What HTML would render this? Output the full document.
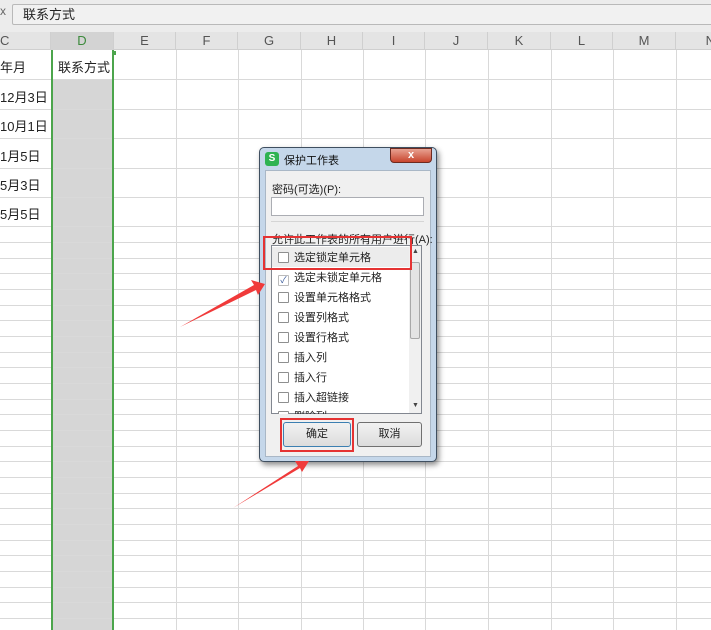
<!DOCTYPE html>
<html><head><meta charset="utf-8"><style>
*{margin:0;padding:0;box-sizing:border-box}
body{width:711px;height:630px;overflow:hidden;background:#fff;position:relative;font-family:"Liberation Sans","Noto Sans CJK SC",sans-serif;font-size:12px;color:#222}
.a{position:absolute}
.vl{position:absolute;top:50px;bottom:0;width:1px;background:#d9d9d9}
.hl{position:absolute;left:0;right:0;height:1px;background:#d9d9d9}
.hd{position:absolute;top:32px;height:18px;font-size:13px;color:#555;text-align:center;line-height:18px;border-right:1px solid #cfcfcf}
.it{position:absolute;left:278px;font-size:11px;color:#222;height:14px;line-height:14px}
.cb{display:inline-block;width:11px;height:11px;border:1px solid #8e8f8f;background:#fff;vertical-align:-2px;margin-right:5px;border-radius:1px}
</style></head><body>
<div class="a" style="left:0;top:0;width:711px;height:32px;background:#ececec"></div>
<div class="a" style="left:0;top:4px;font-size:12px;color:#666">x</div>
<div class="a" style="left:12px;top:4px;width:705px;height:21px;background:#f1f1f1;border:1px solid #b9b9b9;border-radius:2px;padding-left:10px;line-height:19px;font-size:13px">联系方式</div>
<div class="a" style="left:0;top:32px;width:711px;height:18px;background:#e4e4e4;border-bottom:1px solid #cfcfcf"></div>
<div class="hd" style="left:0;width:51px;text-align:left">C</div>
<div class="hd" style="left:51px;width:63px;background:#d3d3d3;color:#3c8a3c">D</div>
<div class="hd" style="left:114px;width:62px">E</div>
<div class="hd" style="left:176px;width:62px">F</div>
<div class="hd" style="left:238px;width:63px">G</div>
<div class="hd" style="left:301px;width:62px">H</div>
<div class="hd" style="left:363px;width:62px">I</div>
<div class="hd" style="left:425px;width:63px">J</div>
<div class="hd" style="left:488px;width:63px">K</div>
<div class="hd" style="left:551px;width:62px">L</div>
<div class="hd" style="left:613px;width:63px">M</div>
<div class="hd" style="left:676px;width:40px;text-align:right">N</div>
<div class="vl" style="left:176px"></div><div class="vl" style="left:238px"></div><div class="vl" style="left:301px"></div><div class="vl" style="left:363px"></div><div class="vl" style="left:425px"></div><div class="vl" style="left:488px"></div><div class="vl" style="left:551px"></div><div class="vl" style="left:613px"></div><div class="vl" style="left:676px"></div>
<div class="a" style="left:53px;top:80px;width:60px;height:550px;background:#d6d6d6"></div>
<div class="hl" style="top:79px"></div><div class="hl" style="top:109px"></div><div class="hl" style="top:138px"></div><div class="hl" style="top:168px"></div><div class="hl" style="top:197px"></div><div class="hl" style="top:226px"></div>
<div class="hl" style="top:242px"></div><div class="hl" style="top:258px"></div><div class="hl" style="top:273px"></div><div class="hl" style="top:289px"></div><div class="hl" style="top:305px"></div><div class="hl" style="top:320px"></div><div class="hl" style="top:336px"></div><div class="hl" style="top:352px"></div><div class="hl" style="top:367px"></div><div class="hl" style="top:383px"></div><div class="hl" style="top:399px"></div><div class="hl" style="top:414px"></div><div class="hl" style="top:430px"></div><div class="hl" style="top:446px"></div><div class="hl" style="top:461px"></div><div class="hl" style="top:477px"></div><div class="hl" style="top:493px"></div><div class="hl" style="top:508px"></div><div class="hl" style="top:524px"></div><div class="hl" style="top:540px"></div><div class="hl" style="top:555px"></div><div class="hl" style="top:571px"></div><div class="hl" style="top:587px"></div><div class="hl" style="top:602px"></div><div class="hl" style="top:618px"></div>
<div class="a" style="left:51px;top:50px;width:2px;height:580px;background:#4ca54c"></div>
<div class="a" style="left:112px;top:50px;width:2px;height:580px;background:#4ca54c"></div>
<div class="a" style="left:112px;top:51px;width:4px;height:4px;background:#4ca54c"></div>
<div class="a" style="left:0;top:57px;font-size:13px">年月</div>
<div class="a" style="left:58px;top:57px;font-size:13px">联系方式</div>
<div class="a" style="left:0;top:87px;font-size:13px">12月3日</div>
<div class="a" style="left:0;top:116px;font-size:13px">10月1日</div>
<div class="a" style="left:0;top:146px;font-size:13px">1月5日</div>
<div class="a" style="left:0;top:175px;font-size:13px">5月3日</div>
<div class="a" style="left:0;top:204px;font-size:13px">5月5日</div>
<!-- dialog -->
<div class="a" style="left:259px;top:147px;width:178px;height:315px;background:#c5d7ea;border:1px solid #3f4f60;border-radius:5px;box-shadow:2px 3px 6px rgba(0,0,0,.45)"></div>
<div class="a" style="left:390px;top:148px;width:42px;height:15px;background:linear-gradient(#e8a292,#c8452e);border:1px solid #6d2a20;border-radius:0 0 4px 4px;color:#fff;font-weight:bold;text-align:center;font-size:11px;line-height:13px">x</div>
<div class="a" style="left:265px;top:152px;width:14px;height:14px;background:#2fb352;border-radius:3px;color:#fff;font-size:10px;font-weight:bold;text-align:center;line-height:14px">S</div>
<div class="a" style="left:284px;top:152px;font-size:11px;color:#111">保护工作表</div>
<div class="a" style="left:265px;top:170px;width:166px;height:287px;background:#f0f0f0;border:1px solid #a9b7c6"></div>
<div class="a" style="left:272px;top:181px;font-size:11px">密码(可选)(P):</div>
<div class="a" style="left:271px;top:197px;width:153px;height:19px;background:#fff;border:1px solid #abadb3"></div>
<div class="a" style="left:271px;top:221px;width:153px;height:1px;background:#d5d5d5"></div>
<div class="a" style="left:272px;top:231px;font-size:11px">允许此工作表的所有用户进行(A):</div>
<div class="a" style="left:271px;top:245px;width:151px;height:169px;background:#fff;border:1px solid #828790;overflow:hidden"></div>
<div class="a" style="left:272px;top:247px;width:137px;height:20px;background:#ececec"></div>
<div class="a" style="left:409px;top:246px;width:12px;height:167px;background:#f0f0f0"></div>
<div class="a" style="left:410px;top:262px;width:10px;height:77px;background:#e4e4e4;border:1px solid #a8a8a8;border-radius:2px"></div>
<div class="a" style="left:412px;top:248px;font-size:7px;color:#444">▲</div>
<div class="a" style="left:412px;top:402px;font-size:7px;color:#444">▼</div>
<div class="it" style="top:251px"><span class="cb"></span>选定锁定单元格</div>
<div class="it" style="top:271px"><span class="cb" style="border-color:#bbb;color:#3a5a9a;font-size:9px;line-height:9px;text-align:center">✓</span>选定未锁定单元格</div>
<div class="it" style="top:291px"><span class="cb"></span>设置单元格格式</div>
<div class="it" style="top:311px"><span class="cb"></span>设置列格式</div>
<div class="it" style="top:331px"><span class="cb"></span>设置行格式</div>
<div class="it" style="top:351px"><span class="cb"></span>插入列</div>
<div class="it" style="top:371px"><span class="cb"></span>插入行</div>
<div class="it" style="top:391px"><span class="cb"></span>插入超链接</div>
<div class="it" style="top:410px;height:4px;overflow:hidden"><span class="cb"></span>删除列</div>
<div class="a" style="left:283px;top:422px;width:68px;height:25px;background:linear-gradient(#f2f2f2,#dcdcdc);border:1px solid #3c7fb1;border-radius:3px;text-align:center;line-height:23px;font-size:11px">确定</div>
<div class="a" style="left:357px;top:422px;width:65px;height:25px;background:linear-gradient(#f2f2f2,#dcdcdc);border:1px solid #707070;border-radius:3px;text-align:center;line-height:23px;font-size:11px">取消</div>
<div class="a" style="left:263px;top:236px;width:149px;height:34px;border:2px solid #e53333"></div>
<div class="a" style="left:280px;top:418px;width:74px;height:34px;border:2px solid #e53333"></div>
<svg class="a" style="left:0;top:0" width="711" height="630">
<polygon points="180,327 254,285 251,280 265,284 258,295 256,290" fill="#f03a3a"/>
<polygon points="233,508 298,466 295,461 309,461 302,472 300,468" fill="#f03a3a"/>
</svg>
</body></html>
